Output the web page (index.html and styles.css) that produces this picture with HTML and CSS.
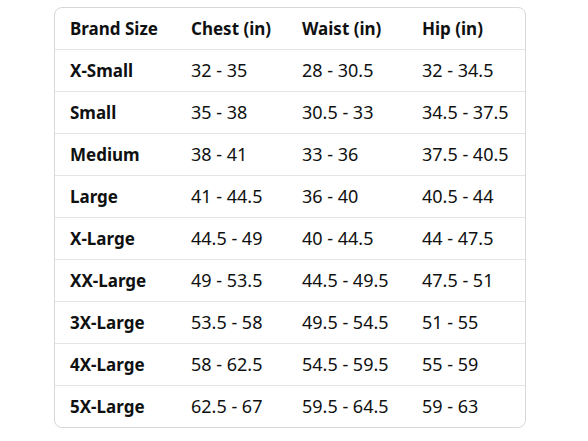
FILE: index.html
```html
<!DOCTYPE html>
<html lang="en-US">

<head>
    <meta charset="utf-8">
    <title>Size Chart</title>
    <link rel="stylesheet" href="styles.css">
</head>

<body>
    <div class="chart">
        <table class="sizes">
            <tr class="head">
                <th class="c1">Brand Size</th>
                <th class="c2">Chest (in)</th>
                <th class="c3">Waist (in)</th>
                <th class="c4">Hip (in)</th>
            </tr>
            <tr><th>X-Small</th><td>32 - 35</td><td>28 - 30.5</td><td>32 - 34.5</td></tr>
            <tr><th>Small</th><td>35 - 38</td><td>30.5 - 33</td><td>34.5 - 37.5</td></tr>
            <tr><th>Medium</th><td>38 - 41</td><td>33 - 36</td><td>37.5 - 40.5</td></tr>
            <tr><th>Large</th><td>41 - 44.5</td><td>36 - 40</td><td>40.5 - 44</td></tr>
            <tr><th>X-Large</th><td>44.5 - 49</td><td>40 - 44.5</td><td>44 - 47.5</td></tr>
            <tr><th>XX-Large</th><td>49 - 53.5</td><td>44.5 - 49.5</td><td>47.5 - 51</td></tr>
            <tr><th>3X-Large</th><td>53.5 - 58</td><td>49.5 - 54.5</td><td>51 - 55</td></tr>
            <tr><th>4X-Large</th><td>58 - 62.5</td><td>54.5 - 59.5</td><td>55 - 59</td></tr>
            <tr><th>5X-Large</th><td>62.5 - 67</td><td>59.5 - 64.5</td><td>59 - 63</td></tr>
        </table>
    </div>
</body>

</html>
```

FILE: styles.css
```css
html {
    background: #fff;
}

body {
    margin: 0;
    padding: 7px 0 0 54px;
    color: #0f1111;
    font-family: "Noto Sans", "Open Sans", sans-serif;
    font-size: 17px;
}

.chart {
    width: 472px;
    box-sizing: border-box;
    border: 1px solid #d5d9d9;
    border-radius: 8px;
    overflow: hidden;
}

.sizes {
    width: 100%;
    border-collapse: collapse;
    table-layout: fixed;
}

.sizes tr {
    height: 42px;
    border-top: 1px solid #e3e6e6;
}

.sizes tr.head {
    height: 41px;
    border-top: none;
}

.sizes th,
.sizes td {
    box-sizing: border-box;
    padding: 0 0 0 15px;
    text-align: left;
    white-space: nowrap;
}

.sizes th {
    font-weight: 700;
}

.sizes td {
    font-size: 18px;
    font-weight: 400;
}

.c1 { width: 121px; }
.c2 { width: 111px; }
.c3 { width: 120px; }
```
